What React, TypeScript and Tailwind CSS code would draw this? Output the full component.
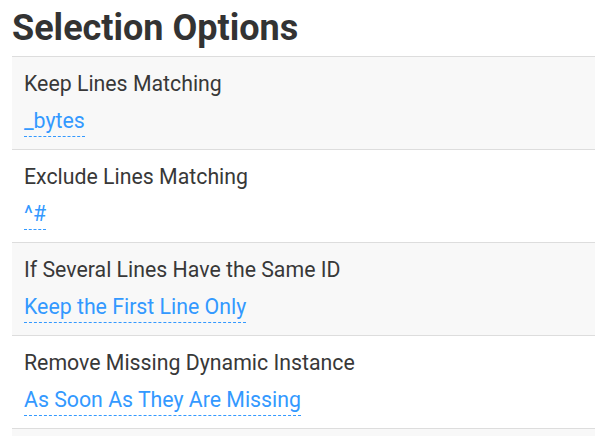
import React from "react";

const rows = [
  { label: "Keep Lines Matching", value: "_bytes", gray: true },
  { label: "Exclude Lines Matching", value: "^#", gray: false },
  { label: "If Several Lines Have the Same ID", value: "Keep the First Line Only", gray: true },
  { label: "Remove Missing Dynamic Instance", value: "As Soon As They Are Missing", gray: false },
];

export default function App() {
  return (
    <div className="w-[612px] h-[436px] bg-white overflow-hidden" style={{ fontFamily: "Roboto, 'Noto Sans', sans-serif" }}>
      <div className="px-3">
        <h1 className="text-[36px] leading-[56px] font-bold text-[#333333]">Selection Options</h1>
        <div className="w-[583px] border-t border-[#dddddd]">
          {rows.map((r, i) => (
            <div key={i} className={`h-[93px] border-b border-[#dddddd] px-3 pt-[15px] ${r.gray ? "bg-[#f8f8f8]" : "bg-white"}`}>
              <div className="text-[21.3px] leading-[24px] text-[#383838]">{r.label}</div>
              <div className="mt-[13px] text-[21.3px] leading-[24px]">
                <span className="text-[#3399ff] pb-[3px] border-b border-dashed border-[#3399ff]">{r.value}</span>
              </div>
            </div>
          ))}
          <div className="h-[20px] bg-[#f8f8f8]"></div>
        </div>
      </div>
    </div>
  );
}
